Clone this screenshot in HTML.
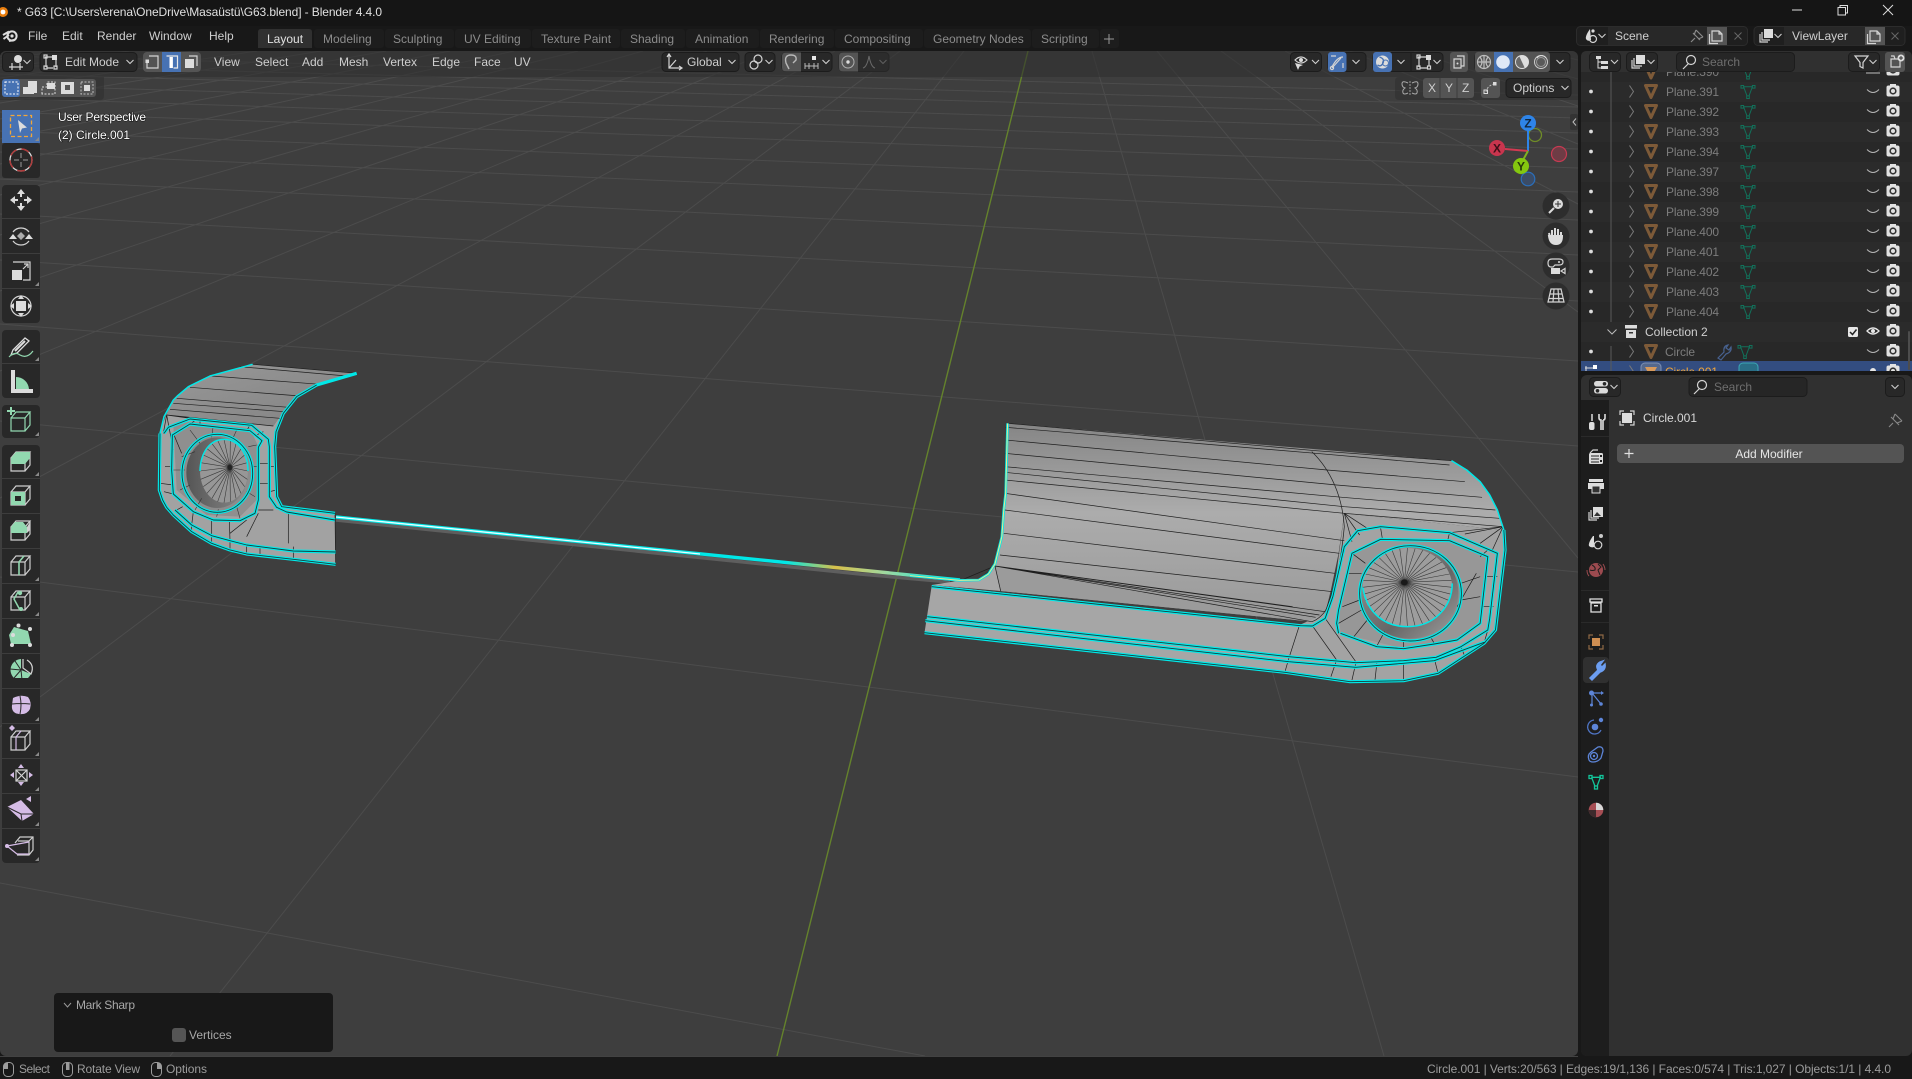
<!DOCTYPE html>
<html lang="en"><head><meta charset="utf-8"><title>G63 - Blender 4.4.0</title>
<style>
html,body{margin:0;padding:0;background:#181818;width:1912px;height:1079px;overflow:hidden}
svg{display:block}
text{font-family:"Liberation Sans",sans-serif;font-size:12px;fill:#cfcfcf}
.m{fill:#cfcfcf}.tab{fill:#8c8c8c}.dim{fill:#7c7c7c;letter-spacing:-.12px}.st{fill:#9c9c9c}
.i{fill:none;stroke:#d4d4d4;stroke-width:1.2}
.f{fill:#dcdcdc;stroke:none}
.btn{fill:#282828;stroke:#1c1c1c}
.on{fill:#545454}.bl{fill:#4772b3}
.g{fill:#92d8b0;stroke:none}.gl{fill:none;stroke:#92d8b0;stroke-width:1.2}
.p{fill:#d5bce6;stroke:none}.pl{fill:none;stroke:#d5bce6;stroke-width:1.2}
.n{vector-effect:non-scaling-stroke}
.dk{fill:none;stroke:#1e1e1e;stroke-width:.7;vector-effect:non-scaling-stroke}
.cy{fill:none;stroke:#00e8e8;stroke-width:1.5;vector-effect:non-scaling-stroke;stroke-linejoin:round}
.cc{fill:none;stroke:#00eaea;stroke-width:3.2;vector-effect:non-scaling-stroke;stroke-linejoin:round}
.cd{fill:none;stroke:#1a3a3a;stroke-width:.9;vector-effect:non-scaling-stroke;stroke-linejoin:round}
</style></head><body>
<svg xmlns="http://www.w3.org/2000/svg" width="1912" height="1079" viewBox="0 0 1912 1079">
<defs>
<clipPath id="vp"><rect x="0" y="51" width="1578" height="1005" rx="6"/></clipPath>
<clipPath id="ol"><rect x="1581" y="72" width="331" height="299"/></clipPath>
<linearGradient id="gt" x1="0" y1="0" x2="0" y2="1"><stop offset="0" stop-color="#858585"/><stop offset=".45" stop-color="#acacac"/><stop offset="1" stop-color="#9a9a9a"/></linearGradient>
<linearGradient id="gl" x1="0" y1="0" x2="1" y2="1"><stop offset="0" stop-color="#989898"/><stop offset="1" stop-color="#828282"/></linearGradient>
<linearGradient id="gw" x1="0" y1="0" x2="1" y2="0"><stop offset="0" stop-color="#555"/><stop offset="1" stop-color="#8a8a8a"/></linearGradient>
<linearGradient id="gw2" x1="0" y1="0" x2="1" y2="1"><stop offset="0" stop-color="#9a9a9a"/><stop offset=".6" stop-color="#666"/><stop offset="1" stop-color="#a0a0a0"/></linearGradient>
<linearGradient id="gs" x1="0" y1="0" x2="1" y2="0"><stop offset="0" stop-color="#00e8e8"/><stop offset=".72" stop-color="#00e8e8"/><stop offset=".8" stop-color="#d8c04a"/><stop offset=".88" stop-color="#9fd8a0"/><stop offset="1" stop-color="#00e8e8"/></linearGradient>
<path id="chev" d="M-3.5 -2 L0 1.5 L3.5 -2" fill="none" stroke="#cfcfcf" stroke-width="1.1"/>
<path id="tri" d="M-5.5 -6 H5.5 L0 6Z" fill="none" stroke="#7d5a38" stroke-width="3" stroke-linejoin="round"/>
<g id="mesh" fill="none" stroke="#12705a" stroke-width="1"><path d="M-4.4 -4.7 H4.4 L1 4.4 M-4.4 -4.7 L-1 4.4"/><rect x="-7" y="-6" width="2.600" height="2.600"/><rect x="4.400" y="-6" width="2.600" height="2.600"/><rect x="-1.300" y="4.400" width="2.600" height="2.600"/></g>
<path id="lash" d="M-6 -2 Q0 4 6 -2" fill="none" stroke="#b5b5b5" stroke-width="1"/>
<g id="cam"><rect x="-6.5" y="-5.5" width="13" height="11" rx="2" fill="#e2e2e2"/><circle r="3.6" fill="#333"/><circle r="2" fill="#e2e2e2"/><rect x="-3" y="-7" width="6" height="2" fill="#e2e2e2"/></g>
<g id="cube" fill="none" stroke="#cfcfcf" stroke-width="1.2"><path d="M-10 -3 H4 V10 H-10Z M-10 -3 L-5 -9 H9 L4 -3 M9 -9 V4 L4 10"/></g>
<path id="corner" d="M0 0 L-4 0 L0 -4Z" fill="#8a8a8a"/>
<g id="dot"><circle r="1.9" fill="#dcdcdc"/></g>
<path id="dbl" vector-effect="non-scaling-stroke" d="M650 70 L530 105 470 140 430 190 408 245 404 290 410 440 425 470 585 490 M72 250 L85 232 150 207 335 226 385 268 388 290 388 440 410 472 440 486 585 510 M97 255 L150 222 330 242 366 272 355 292 355 450 345 490 300 512 220 510 160 485 100 432 95 360Z M105 480 L155 525 215 557 270 572 320 585 460 603 587 606 M100 495 L155 545 215 580 270 600 320 612 460 628 587 643 M60 250 L58 420 68 450 80 472 100 495"/>
<path id="dbr" vector-effect="non-scaling-stroke" d="M57 530 L1020 647 1052 648 1085 625 1105 560 1135 410 1170 362 1230 350 1410 368 1535 430 1515 625 1510 660 1440 710 1375 742 1290 752 1165 758 990 740 45 620 M40 632 L990 755 1165 772 1370 752 1505 695 M1120 670 L1115 640 1120 600 1155 430 1230 388 1410 392 1510 440 1490 640 1430 690 1370 702 1290 716 1220 710 1125 670 M38 668 L980 787 1150 815 1290 812 1380 790 1500 700 1530 660 1555 420 1552 360"/>
</defs>

<!-- chrome -->
<rect width="1912" height="1079" fill="#181818"/>
<rect width="1912" height="26" fill="#151515"/>

<!-- viewport -->
<g clip-path="url(#vp)">
<rect x="0" y="51" width="1578" height="1005" fill="#3e3e3e"/>
<path fill="none" stroke="#4c4c4c" stroke-width="1" d="M64 51L0 59M129 51L0 68M193 51L0 78M257 51L0 89M321 51L0 103M386 51L0 119M450 51L0 139M514 51L0 164M578 51L0 195M643 51L0 235M707 51L0 291M771 51L0 371M835 51L0 498M900 51L0 727M964 51L170 1056M1092 51L1384 1056M1157 51L1578 558M1221 51L1578 312M1285 51L1578 204M1350 51L1578 144M1414 51L1578 106M1478 51L1578 79M1542 51L1578 60
M0 883L925 1056M0 577L1578 777M0 421L1578 572M0 324L1578 446M0 260L1578 361M0 214L1578 301M0 179L1578 255M0 152L1578 220M0 131L1578 192M0 112L1578 168M0 98L1578 149M0 85L1578 133M0 74L1578 118M0 65L1578 107M0 56L1578 95"/>
<path d="M1028 51L777 1056" stroke="#64822c" stroke-width="1.4" fill="none"/>

<!-- thin strip -->
<path d="M336 520 L860 574 L950 582" stroke="#5e5e5e" stroke-width="3.500" fill="none"/>
<path d="M336 517 L860 570 L960 580" stroke="url(#gs)" stroke-width="3.400" fill="none"/>
<path d="M336 517 L700 554" stroke="#eaffff" stroke-width="1.300" fill="none"/>

<!-- left piece -->
<g transform="translate(140 350) scale(.33333)">
<polygon fill="url(#gl)" points="338,43 650,70 530,105 470,140 430,185 400,228 78,195 100,150 145,110 210,78"/>
<polygon fill="#a2a2a2" points="78,195 400,228 430,185 410,240 404,290 410,440 425,470 585,490 587,645 460,628 320,612 270,600 215,580 155,545 100,495 80,472 68,450 58,420 58,250"/>
<polygon fill="#8f8f8f" points="100,225 150,215 330,235 355,290 350,450 300,500 200,495 110,420"/>
<ellipse cx="232" cy="370" rx="108" ry="120" fill="#8c8c8c"/>
<ellipse cx="232" cy="368" rx="93" ry="106" fill="url(#gw)"/>
<ellipse cx="252" cy="363" rx="72" ry="95" fill="#979797"/>
<path class="dk" d="M338 43L650 70M300 50L620 78M215 78L540 103M150 112L480 138M110 145L445 172M100 160L435 185M90 178L420 205M80 195L400 228
M80 195L100 300M80 195L150 205M80 195L70 250M100 250L125 310M150 222L175 205M180 225L180 205M330 225L320 242M350 255L370 245
M60 400L100 405M75 350L95 350M100 432L72 425M128 470L110 480M160 485L155 525M215 510L215 557M268 512L270 572M270 550L320 510M320 560L355 490M400 480L355 480M355 340L388 340M355 400L388 400M405 350L388 350M410 420L388 425
M155 525L155 545M215 557L215 580M270 572L270 600M320 585L320 612M360 590L360 615M460 590L460 628M445 490L445 580M585 490L587 645"/>
<path fill="none" stroke="#3a3a3a" stroke-width=".6" class="n" d="M270 352L324 363M270 352L322 388M270 352L314 410M270 352L303 430M270 352L288 445M270 352L271 455M270 352L252 458M270 352L233 455M270 352L216 445M270 352L201 430M270 352L190 410M270 352L182 388M270 352L180 363M270 352L182 338M270 352L190 315M270 352L201 296M270 352L216 281M270 352L233 271M270 352L252 268M270 352L271 271M270 352L288 281M270 352L303 296M270 352L314 315M270 352L322 338"/>
<path fill="none" stroke="#333" stroke-width=".6" class="n" d="M125 320L165 305M100 360L135 360M120 420L150 405M165 480L185 445M230 500L235 478M300 505L290 470M345 440L320 425M355 350L335 350M350 285L325 290M290 240L280 262M220 225L215 262M150 240L180 280"/>
<circle cx="270" cy="352" r="8" fill="#1c1c1c" opacity=".75"/>
<use href="#dbl" class="cc"/><use href="#dbl" class="cd"/>
<ellipse cx="232" cy="370" rx="106" ry="117" class="cc"/><ellipse cx="232" cy="370" rx="106" ry="117" class="cd"/>
<path class="cy" d="M180 363 C182 300 215 268 252 268 C295 268 324 310 324 363"/>
<path class="cy" d="M338 43L210 78 145 110 112 138 100 150 72 200 60 250M650 70L530 105"/>
</g>

<!-- right piece -->
<g transform="translate(910 410) scale(.38265 .33333)">
<polygon fill="url(#gt)" points="255,40 1415,152 1455,180 1490,215 1515,255 1535,300 1552,360 1135,310 1130,350 1120,430 1100,540 1085,610 1050,635 237,543 222,468 240,380 250,250"/>
<polygon fill="#9b9b9b" points="222,468 1085,600 1050,635 237,543"/>
<polygon fill="#a6a6a6" points="57,525 1020,645 1000,740 980,785 38,668"/>
<polygon fill="#a3a3a3" points="1135,310 1552,360 1558,420 1530,660 1500,700 1380,790 1290,812 1150,815 980,785 1018,645 1085,610 1110,530"/>
<polygon fill="#979797" points="1155,430 1230,388 1410,392 1510,440 1490,640 1430,690 1290,716 1125,670 1120,600"/>
<polygon fill="#a8a8a8" points="130,512 180,510 222,468 237,543 57,525"/>
<ellipse cx="1308" cy="550" rx="136" ry="145" fill="#8d8d8d"/>
<ellipse cx="1305" cy="548" rx="128" ry="138" fill="url(#gw2)"/>
<ellipse cx="1300" cy="532" rx="117" ry="118" fill="#9d9d9d"/>
<path class="dk" d="M255 40L1060 122 1415 152M250 52L1060 130 1410 165M250 90L1090 180 1450 215M248 130L1115 225 1495 262M248 170L1130 262 1530 300M248 187L1135 290 1540 325M248 210L1135 310 1550 350M248 250L1135 392M248 300L1122 430M245 370L1110 490M235 435L1105 545M222 468L1085 605M222 468L1070 615M222 468L1060 622M222 468L1050 635M222 468L1000 590M222 468L237 543M222 468L135 510M180 510L222 468
M1050 125C1100 180 1130 260 1135 350C1125 470 1110 530 1090 590C1085 610 1065 630 1050 635
M1135 310L1195 355M1135 310L1175 375M1135 310L1155 395M1550 350L1410 368M1550 350L1450 372M1550 350L1490 400M1550 350L1520 425M1018 645L990 745L980 785M1052 648L1115 750M1085 625L1165 755M1115 750L1100 800M1165 760L1155 810M1220 760L1215 812M1290 752L1290 812M1370 745L1380 790M1440 710L1450 740M1510 660L1500 700
M1155 430L1190 460M1230 355L1235 390M1410 368L1405 392M1510 420L1490 440M1535 500L1505 500M1525 590L1495 590M1490 500L1440 520M1490 560L1440 570M1480 490L1430 590M1120 640L1180 600M1130 590L1175 570M1145 490L1180 490M1160 680L1195 630M1220 708L1240 665M1290 716L1290 695M1370 700L1360 680"/>
<path fill="none" stroke="#3a3a3a" stroke-width=".6" class="n" d="M1292 517L1417 532M1292 517L1415 553M1292 517L1410 572M1292 517L1401 591M1292 517L1390 608M1292 517L1375 622M1292 517L1358 634M1292 517L1340 643M1292 517L1320 648M1292 517L1300 650M1292 517L1280 648M1292 517L1260 643M1292 517L1242 634M1292 517L1225 622M1292 517L1210 608M1292 517L1199 591M1292 517L1190 572M1292 517L1185 553M1292 517L1183 532M1292 517L1185 511M1292 517L1190 492M1292 517L1199 473M1292 517L1210 456M1292 517L1225 442M1292 517L1242 430M1292 517L1260 421M1292 517L1280 416M1292 517L1300 414M1292 517L1320 416M1292 517L1340 421M1292 517L1358 430M1292 517L1375 442M1292 517L1390 456M1292 517L1401 473M1292 517L1410 492M1292 517L1415 511"/>
<circle cx="1292" cy="517" r="9" fill="#111" opacity=".8"/>
<use href="#dbr" class="cc"/><use href="#dbr" class="cd"/>
<ellipse cx="1308" cy="550" rx="133" ry="143" class="cc"/><ellipse cx="1308" cy="550" rx="133" ry="143" class="cd"/>
<path class="cy" d="M1183 532 C1195 610 1240 650 1300 650 C1370 650 1417 590 1417 520"/>
<path class="cy" d="M1415 152L1455 180 1490 215 1515 255 1535 300 1552 360"/>
<path d="M255 40L250 250 245 300 240 380 222 462 205 492 180 510 130 511 0 497" fill="none" stroke="#00e8e8" stroke-width="2.6" class="n"/>
<path d="M255 40L250 250 245 300 240 380 222 462 205 492 180 510 130 511 0 497" fill="none" stroke="#e8e890" stroke-width="1" class="n"/>
</g>

<!-- translucent regions -->
<rect x="0" y="51" width="1578" height="26" fill="#303030" opacity=".6"/>
<path d="M0 77H104V96Q104 100 100 100H0Z" fill="#303030" opacity=".6"/>
<path d="M1578 77H1399Q1395 77 1395 81V96Q1395 100 1399 100H1578Z" fill="#303030" opacity=".6"/>
</g>

<!-- title bar -->
<circle cx="3" cy="12" r="5" fill="#e87d0d"/><circle cx="3" cy="12" r="2.4" fill="#fff"/>
<text x="17" y="16" textLength="365" lengthAdjust="spacing" style="fill:#e0e0e0">* G63 [C:\Users\erena\OneDrive\Masaüstü\G63.blend] - Blender 4.4.0</text>
<path d="M1792 10H1802" stroke="#ddd" fill="none"/>
<path d="M1838 7.5H1845.5V15H1838Z M1840 7.5V5.5H1847.5V13H1845.5" stroke="#ddd" fill="none"/>
<path d="M1883 5L1893 15M1893 5L1883 15" stroke="#ddd" fill="none"/>

<!-- top bar -->
<g transform="translate(11 36)"><circle cx="1" cy="0" r="4.6" fill="none" stroke="#ddd" stroke-width="2"/><path d="M-8 -1L-2 -4.5 M-7.5 3 L-2 -1 M-2 5L3 4" stroke="#ddd" stroke-width="2" fill="none"/><circle cx="1" cy="0" r="1.6" fill="#ddd"/></g>
<text x="28" y="40" class="m">File</text><text x="62" y="40" class="m">Edit</text><text x="97" y="40" class="m">Render</text><text x="149" y="40" class="m">Window</text><text x="209" y="40" class="m">Help</text>
<g fill="#1d1d1d"><path d="M258 48V32Q258 29 261 29H309Q312 29 312 32V48Z" fill="#303030"/><rect x="314" y="29" width="70" height="19" rx="3"/><rect x="385" y="29" width="69" height="19" rx="3"/><rect x="455" y="29" width="76" height="19" rx="3"/><rect x="532" y="29" width="88" height="19" rx="3"/><rect x="621" y="29" width="64" height="19" rx="3"/><rect x="686" y="29" width="73" height="19" rx="3"/><rect x="760" y="29" width="74" height="19" rx="3"/><rect x="835" y="29" width="88" height="19" rx="3"/><rect x="924" y="29" width="107" height="19" rx="3"/><rect x="1032" y="29" width="67" height="19" rx="3"/><rect x="1100" y="29" width="19" height="19" rx="3"/></g>
<text x="267" y="43" style="fill:#e0e0e0">Layout</text><text x="323" y="43" class="tab">Modeling</text><text x="393" y="43" class="tab">Sculpting</text><text x="464" y="43" class="tab">UV Editing</text><text x="541" y="43" class="tab">Texture Paint</text><text x="630" y="43" class="tab">Shading</text><text x="695" y="43" class="tab">Animation</text><text x="769" y="43" class="tab">Rendering</text><text x="844" y="43" class="tab">Compositing</text><text x="933" y="43" class="tab">Geometry Nodes</text><text x="1041" y="43" class="tab">Scripting</text>
<path d="M1109 34V44M1104 39H1114" stroke="#999" fill="none"/>

<!-- scene selectors -->
<rect x="1576.5" y="26.5" width="171" height="19" rx="4" fill="#1f1f1f" stroke="#2c2c2c"/>
<rect x="1608" y="27" width="99" height="18" fill="#282828"/>
<rect x="1707" y="27" width="20" height="18" class="on"/>
<g transform="translate(1591 36)"><path d="M-1 -7Q-6 0 -5 3Q-3 6 0 4Z" class="f"/><circle cx="2" cy="3" r="3.5" class="i"/><circle cx="2" cy="-5" r="1.6" class="f"/></g><use href="#chev" x="1602" y="36"/>
<text x="1615" y="40">Scene</text>
<g class="i" style="stroke:#8a8a8a"><path d="M1691 42L1695 38M1693 33L1700 40M1696 30L1703 37M1696 30L1694 35M1703 37L1698 39"/></g>
<path d="M1712 31H1719L1722 34V41H1712Z M1719 31V34H1722 M1709.5 34V43.5H1718" class="i"/>
<path d="M1734.5 32.5L1741.5 39.5M1741.5 32.5L1734.5 39.5" stroke="#666" fill="none"/>
<rect x="1754" y="26.5" width="151" height="19" rx="4" fill="#1f1f1f" stroke="#2c2c2c"/>
<rect x="1784" y="27" width="81" height="18" fill="#282828"/><rect x="1865" y="27" width="20" height="18" class="on"/>
<g transform="translate(1767 36)"><rect x="-3" y="-7" width="9" height="9" class="f"/><path d="M-5 -4V4H3M-7 -2V6H1" class="i"/></g><use href="#chev" x="1778" y="36"/>
<text x="1792" y="40">ViewLayer</text>
<path d="M1870 31H1877L1880 34V41H1870Z M1877 31V34H1880 M1867.5 34V43.5H1876" class="i"/>
<path d="M1891.5 32.5L1898.5 39.5M1898.5 32.5L1891.5 39.5" stroke="#666" fill="none"/>

<!-- viewport header -->
<rect x="2.5" y="52.5" width="31" height="19" rx="4" class="btn"/>
<g transform="translate(17 62)"><path d="M-8 5H6M-5 1V8M3 1V8" class="i"/><circle cx="1" cy="-3" r="4" class="f"/></g><use href="#chev" x="27" y="62"/>
<rect x="40" y="52.5" width="97" height="19" rx="4" class="btn"/>
<g transform="translate(51 62)"><rect x="1" y="-7" width="5" height="5" class="f"/><path d="M-6 -5H1M-5 -4V5M-4 6H2M5 -2V5" class="i"/><rect x="-7" y="-7" width="3" height="3" class="i"/><rect x="-7" y="4" width="3" height="3" class="i"/><rect x="3" y="4" width="3" height="3" class="i"/></g>
<text x="65" y="66">Edit Mode</text><use href="#chev" x="130" y="62"/>
<rect x="143" y="52" width="58" height="20" rx="4" class="on"/><rect x="162" y="52" width="19" height="20" class="bl"/>
<g transform="translate(152 62)"><path d="M-3 -6H6V6H-5V0" class="i"/><rect x="-6.5" y="-2.5" width="3.5" height="3.5" class="f"/></g>
<g transform="translate(171.500 62)"><path d="M-5 -6H6V6H2" fill="none" stroke="#e8e8e8" stroke-width="1.2"/><rect x="-2" y="-5" width="3.4" height="11" fill="#fff"/></g>
<g transform="translate(191 62)"><path d="M-2 -6H6V4" class="i"/><rect x="-6" y="-3" width="9" height="9" class="f"/></g>
<text x="214" y="66">View</text><text x="255" y="66">Select</text><text x="302" y="66">Add</text><text x="339" y="66">Mesh</text><text x="383" y="66">Vertex</text><text x="432" y="66">Edge</text><text x="474" y="66">Face</text><text x="514" y="66">UV</text>

<rect x="662" y="52.5" width="77" height="19" rx="4" class="btn"/>
<g transform="translate(673 62)"><path d="M-4 -7V6H8M-4 6L3 -2M-6 -5L-4 -8L-2 -5M6 4L9 6L6 8" class="i"/></g><text x="687" y="66">Global</text><use href="#chev" x="732" y="62"/>
<rect x="745" y="52.5" width="30" height="19" rx="4" class="btn"/>
<g transform="translate(756 62)"><circle cx="-2" cy="3" r="4" class="i"/><circle cx="2" cy="-3" r="4" class="i"/></g><use href="#chev" x="769" y="62"/>
<rect x="782" y="52.5" width="50" height="19" rx="4" class="btn"/><path d="M786 52.500H801V71.500H786Q782 71.500 782 67.500V56.500Q782 52.500 786 52.500Z" class="on"/>
<g transform="translate(791 62)"><path d="M-2 7 L-5 1 Q-7 -7 0 -7 Q6 -7 5 -2 L2 1" fill="none" stroke="#b8b8b8" stroke-width="1.4"/></g>
<g transform="translate(811 62)"><path d="M-6 4H7M-6 1V7M-2 1V7M3 1V7M7 1V7" stroke="#b8b8b8" fill="none"/><rect x="1" y="-6" width="4" height="4" fill="#e8e8e8"/></g><use href="#chev" x="826" y="62"/>
<rect x="839" y="52.5" width="50" height="19" rx="4" fill="#2c2c2c" stroke="#262626"/><path d="M843 52.500H858V71.500H843Q839 71.500 839 67.500V56.500Q839 52.500 843 52.500Z" class="on"/>
<circle cx="848" cy="62" r="6" fill="none" stroke="#b0b0b0"/><circle cx="848" cy="62" r="1.7" fill="#ddd"/>
<path d="M863 68 Q867 67 869 56 Q871 67 875 68" fill="none" stroke="#6a6a6a"/><use href="#chev" x="883" y="62" opacity=".3"/>

<rect x="1290.5" y="52.5" width="31" height="19" rx="4" class="btn"/>
<g transform="translate(1301 62)"><path d="M-6 -2Q0 -8 6 -2Q0 4 -6 -2Z" class="i"/><circle cy="-2" r="2" class="f"/><path d="M-6 1L-3 8L-1.500 4.500L2 3Z" class="f"/></g><use href="#chev" x="1315.500" y="62"/>
<rect x="1328" y="52.5" width="38" height="19" rx="4" class="btn"/><rect x="1328" y="52" width="18.500" height="20" rx="3" class="bl"/>
<g transform="translate(1337 62)"><path d="M-5 5Q0 -5 6 -5" class="i"/><circle cx="-5" cy="6" r="1.6" class="i"/><path d="M-6 -6H-1M6 6V1M-5 6 L4 -4" class="i"/></g><use href="#chev" x="1356" y="62"/>
<rect x="1373" y="52.5" width="70" height="19" rx="4" class="btn"/><rect x="1373" y="52" width="19" height="20" rx="3" class="bl"/>
<g transform="translate(1382.500 62)"><circle r="6.500" class="f"/><path d="M-3 -5Q3 -3 0 2Q-2 5 -5 3" stroke="#4772b3" fill="none" stroke-width="1.4"/><circle cx="3" cy="1" r="3" fill="none" stroke="#4772b3"/></g><use href="#chev" x="1401" y="62"/>
<path d="M1411 53V71" stroke="#1d1d1d"/>
<g transform="translate(1424 62)"><rect x="2" y="-7" width="5" height="5" class="f"/><path d="M-6 -5H2M-5 -4V5M-4 6H3M5 -2V4" class="i"/><rect x="-7" y="-7" width="3" height="3" class="i"/><rect x="-7" y="4" width="3" height="3" class="i"/><rect x="3.500" y="4" width="3" height="3" class="i"/></g><use href="#chev" x="1437" y="62"/>
<rect x="1450" y="52" width="18" height="20" rx="3" class="on"/>
<path d="M1457 56H1464V66H1461M1454 59H1461V68H1454Z" class="i"/><circle cx="1457.500" cy="63.500" r="1" class="f"/>
<rect x="1475" y="52.5" width="95" height="19" rx="4" class="btn"/><rect x="1475" y="52" width="75" height="20" rx="3" class="on"/><rect x="1494" y="52" width="19" height="20" class="bl"/>
<g class="i" style="stroke:#bdbdbd"><circle cx="1484" cy="62" r="6.500"/><path d="M1477.500 62H1490.500M1484 55.500V68.500M1480 57Q1484 62 1480 67M1488 57Q1484 62 1488 67"/></g>
<circle cx="1503" cy="62" r="6.800" fill="#e0e8f6"/>
<circle cx="1522" cy="62" r="6.500" fill="#6a6a6a" stroke="#ddd"/><path d="M1522 55.500A6.500 6.500 0 0 1 1522 68.500Z" fill="#ddd" transform="rotate(-25 1522 62)"/>
<circle cx="1541" cy="62" r="6.500" fill="#5a5a5a" stroke="#ccc"/><path d="M1537 58A5.500 5.500 0 0 1 1546 58" stroke="#ddd" fill="none"/><circle cx="1541" cy="62" r="4.500" fill="none" stroke="#9a9a9a"/>
<use href="#chev" x="1560" y="62"/>

<!-- tool settings row -->
<rect x="2" y="79" width="94" height="18" rx="3" class="on"/><rect x="2" y="79" width="18" height="18" rx="3" class="bl"/>
<rect x="5" y="82" width="13" height="12" fill="none" stroke="#fff" stroke-dasharray="2 1.5"/>
<rect x="23" y="87" width="11" height="7" class="f"/><rect x="28" y="81" width="9" height="12" fill="#dcdcdc"/>
<path d="M42 94V87H47V82H55V94Z M47 87H51V90" fill="none" stroke="#dcdcdc" stroke-dasharray="2 1.5"/><rect x="47" y="83" width="8" height="6" class="f"/>
<rect x="61" y="82" width="13" height="12" class="f"/><rect x="65" y="85" width="5" height="5" fill="#545454"/>
<rect x="81" y="82" width="12" height="12" fill="none" stroke="#bbb" stroke-dasharray="2 1.5"/><rect x="84" y="85" width="6" height="6" class="f"/>

<g transform="translate(1411 88)"><path d="M-1 -7V7" stroke="#999" stroke-dasharray="2 1" fill="none"/><path d="M-3 -5Q-9 -8 -9 -4Q-9 -1 -6 0Q-9 2 -8 5Q-7 7 -3 5M1 -5Q7 -8 7 -4Q7 -1 4 0Q7 2 6 5Q5 7 1 5" fill="none" stroke="#aaa"/></g>
<rect x="1423" y="78" width="51" height="20" rx="3" class="on"/><path d="M1440 78V98M1457 78V98" stroke="#3d3d3d"/>
<text x="1428" y="92">X</text><text x="1445" y="92">Y</text><text x="1462" y="92">Z</text>
<rect x="1481" y="78" width="19" height="20" rx="3" class="on"/><path d="M1486 92Q1487 86 1494 84" fill="none" stroke="#bbb" stroke-dasharray="2 1.500"/><rect x="1484" y="90" width="3.500" height="3.500" fill="none" stroke="#ddd"/><rect x="1493" y="82" width="3.500" height="3.500" class="f"/>
<rect x="1506" y="78.5" width="65" height="19" rx="4" class="btn"/><text x="1513" y="92">Options</text><use href="#chev" x="1565" y="88"/>

<!-- viewport text -->
<text x="58" y="121" textLength="88" lengthAdjust="spacing" style="fill:#fff;paint-order:stroke;stroke:#000;stroke-width:1.2px;stroke-opacity:.55">User Perspective</text>
<text x="58" y="139" style="fill:#fff;paint-order:stroke;stroke:#000;stroke-width:1.2px;stroke-opacity:.55">(2) Circle.001</text>

<!-- collapse tab -->
<rect x="1570" y="114" width="8" height="16" rx="2" fill="#333"/><path d="M1576 118.500L1573 122L1576 125.500" fill="none" stroke="#bbb"/>

<!-- toolbar -->
<g fill="#282828"><rect x="2" y="143" width="38" height="35" rx="3"/><rect x="2" y="185" width="38" height="138" rx="4"/><rect x="2" y="330" width="38" height="68" rx="4"/><rect x="2" y="405" width="38" height="33" rx="4"/><rect x="2" y="445" width="38" height="418" rx="4"/></g>
<path d="M2 110H40V143H2Z" class="bl"/>
<path d="M2 218.500H40M2 253.500H40M2 288.500H40M2 363.500H40M2 478.500H40M2 513.500H40M2 548.500H40M2 583.500H40M2 618.500H40M2 653.500H40M2 688.500H40M2 723.500H40M2 758.500H40M2 793.500H40M2 828.500H40" stroke="#3d3d3d"/>
<g fill="#9a9a9a"><use href="#corner" x="39" y="141"/><use href="#corner" x="39" y="286"/><use href="#corner" x="39" y="361"/><use href="#corner" x="39" y="436"/><use href="#corner" x="39" y="476"/><use href="#corner" x="39" y="581"/><use href="#corner" x="39" y="616"/><use href="#corner" x="39" y="721"/><use href="#corner" x="39" y="756"/><use href="#corner" x="39" y="791"/><use href="#corner" x="39" y="826"/><use href="#corner" x="39" y="861"/></g>

<rect x="10.500" y="115.500" width="21" height="21" fill="none" stroke="#f0a63a" stroke-width="1.3" stroke-dasharray="4 2.500"/>
<path d="M18 120L27 127.500L22 128.500L20 133Z" class="f"/>
<g transform="translate(21 160)"><circle r="11" fill="none" stroke="#ddd" stroke-width="1.3"/><circle r="11" fill="none" stroke="#b03a3a" stroke-width="1.4" stroke-dasharray="8 5"/><path d="M-7 0H-2M2 0H7M0 -7V-2M0 2V7" stroke="#9a9a9a" fill="none"/></g>
<g transform="translate(21 200)" class="f"><path d="M0 -11L-4 -6H4Z M0 11L-4 6H4Z M-11 0L-6 -4V4Z M11 0L6 -4V4Z"/><path d="M-1 -7H1V-3H-1Z M-1 3H1V7H-1Z M-7 -1H-3V1H-7Z M3 -1H7V1H3Z"/></g>
<g transform="translate(21 236)"><path d="M-8 -4A10 10 0 0 1 8 -4M8 5A10 10 0 0 1 -8 5" class="i"/><path d="M-12 1L-4 1L-8 -4Z M12 1L4 1L8 -4Z" class="f" transform="translate(0 2)"/><path d="M0 -4L4 0L0 4L-4 0Z" fill="#aaa"/></g>
<g transform="translate(21 271)"><path d="M-8 -9H9V9H2" class="i"/><rect x="-9" y="-1" width="10" height="10" class="f"/><path d="M2 -2L7 -7M3 -7H7V-3" class="i"/></g>
<g transform="translate(21 306)"><circle r="10" class="i"/><rect x="-5" y="-5" width="10" height="10" class="f"/><path d="M0 -11L-3 -7H3Z M0 11L-3 7H3Z M-11 0L-7 -3V3Z M11 0L7 -3V3Z" class="f"/></g>
<g transform="translate(21 347)"><path d="M-8 3L4 -9L8 -6L-4 6L-10 8Z" fill="#222" stroke="#ddd" stroke-width="1.300"/><path d="M-6 4L4 -6" stroke="#ddd" stroke-width="2"/><path d="M-12 10Q-6 4 -1 8Q6 12 12 4" class="gl" stroke-width="1.500"/></g>
<g transform="translate(21 382)"><path d="M-8 -12V9H12" class="i" stroke-width="1.500"/><path d="M-6 -12V7H12V11H-10V-12Z" class="f"/><path d="M-5 -5A13 13 0 0 1 8 7H-5Z" class="g"/></g>
<g transform="translate(21 421)"><path d="M-10 -3H4V10H-10Z M-10 -3L-5 -9H9L4 -3M9 -9V4L4 10" class="gl"/><path d="M-14 -10H-6M-10 -14V-6" stroke="#92d8b0" stroke-width="2" fill="none"/></g>
<g transform="translate(21 461)"><use href="#cube"/><path d="M-10 -3H4V3H-10Z M-10 -3L-5 -9H9L4 -3Z M4 -3L9 -9V-3L4 3Z" class="g"/></g>
<g transform="translate(21 495)"><use href="#cube"/><path d="M-10 -3H4V10H-10Z" class="g"/><rect x="-6" y="1" width="6" height="5" fill="#282828"/></g>
<g transform="translate(21 530)"><use href="#cube"/><path d="M-10 -3L-6 -8 H2 L6 -3 V3H-10Z" class="g"/><path d="M6 -3L9 -8V0L6 3Z" fill="#cfcfcf"/></g>
<g transform="translate(21 565)"><use href="#cube"/><path d="M-2 -3V10M-2 -3L3 -9" stroke="#92d8b0" stroke-width="1.600" fill="none"/></g>
<g transform="translate(21 600)"><use href="#cube"/><path d="M-3 -8L-7 -1L-1 10" stroke="#92d8b0" stroke-width="1.500" fill="none"/><circle cx="-1" cy="-7" r="2.200" class="g"/><circle cx="0" cy="9" r="2" class="g"/></g>
<path d="M14 627L28 631L31 644H11L9 635Z" class="g"/><g class="f"><circle cx="18.500" cy="625.500" r="2"/><circle cx="30" cy="629" r="2"/><circle cx="13" cy="635" r="2"/><circle cx="12" cy="645" r="2"/><circle cx="30" cy="645" r="2"/></g>
<g transform="translate(21 670)"><path d="M0 0L0 -11A11 11 0 0 0 -7 8L7 8Z M0 0L7 8Q9 6 10 4Z" class="g"/><path d="M2 -11L2 -2L10 4Q14 -5 6 -10" class="i"/><path d="M0 0L-11 -1M0 0L-7 8M0 0L1 10M0 0L-6 -9" stroke="#282828" fill="none"/></g>
<g transform="translate(21 705)"><path d="M-8 -7Q0 -11 7 -8Q11 -3 9 4Q6 10 -2 9Q-10 8 -9 0Z" class="p"/><path d="M-9 -1Q0 -2 9 -1M-1 -9Q1 0 -1 9" stroke="#282828" fill="none"/></g>
<g transform="translate(21 740)"><use href="#cube"/><path d="M-5 -3V10M-5 -3L0 -9" class="pl"/><path d="M-11 -11H-5L-8 -14Z M-11 -11H-5L-8 -8Z" class="p" transform="translate(-1 -1)"/></g>
<g transform="translate(21 775)"><rect x="-5" y="-5" width="11" height="11" class="i"/><path d="M-5 -5L6 6M6 -5L-5 6" class="i"/><path d="M0 -11L-3 -7H3Z M0 11L-3 7H3Z M-11 0L-7 -3V3Z M12 0L8 -3V3Z" class="p"/></g>
<g transform="translate(21 810)"><path d="M-14 -3L0 -10L13 4L1 11Z" class="p"/><path d="M-14 -3L0 4L13 4M0 4L1 11" stroke="#282828" fill="none"/><path d="M7 -11H12M10 -14L5 -11L10 -8Z" class="p"/></g>
<g transform="translate(21 845)"><path d="M-6 -2L-1 -8H12V5L8 10H-4" stroke="#cfcfcf" fill="none" stroke-width="1.200"/><path d="M-3 -4H8V10M8 -4L12 -8" stroke="#cfcfcf" fill="none" stroke-width="1.200"/><path d="M-14 1L8 -3M-14 1L-4 9H8" class="pl"/><circle cx="-14" cy="1" r="2" class="p"/></g>

<!-- gizmo -->
<circle cx="1535" cy="135" r="6.500" fill="none" stroke="#6f8c27" stroke-width="1.300"/>
<circle cx="1559" cy="154" r="7.500" fill="#6e3c45" stroke="#c73a52" stroke-width="1.200"/>
<circle cx="1528" cy="179" r="6.800" fill="#3b4c66" stroke="#2a6fbb" stroke-width="1.200"/>
<path d="M1528 129V151" stroke="#2e84e8" stroke-width="2"/>
<path d="M1505 149L1528 151" stroke="#d23a52" stroke-width="2"/>
<path d="M1528 151L1523 160" stroke="#7fb020" stroke-width="2"/>
<circle cx="1528" cy="123" r="8" fill="#2e84e8"/><text x="1528" y="127.500" text-anchor="middle" style="font-weight:bold;fill:#12283f">Z</text>
<circle cx="1497" cy="148" r="8" fill="#c9354e"/><text x="1497" y="152.500" text-anchor="middle" style="font-weight:bold;fill:#3d0f18">X</text>
<circle cx="1521" cy="166" r="8" fill="#84c70f"/><text x="1521" y="170.500" text-anchor="middle" style="font-weight:bold;fill:#26390a">Y</text>
<g fill="#2d2d2d"><circle cx="1556" cy="206" r="13.500"/><circle cx="1556" cy="236" r="13.500"/><circle cx="1556" cy="266" r="13.500"/><circle cx="1556" cy="296" r="13.500"/></g>
<g transform="translate(1556 206)"><circle cx="2" cy="-2" r="5" fill="#dcdcdc"/><path d="M-2 2L-7 7" stroke="#dcdcdc" stroke-width="2"/><path d="M-1 -2H5M2 -5V1" stroke="#333"/></g>
<g transform="translate(1556 236)"><path d="M-6 1L-7 -3M-4 0V-6M-1 0V-8M2 0V-7M5 1V-4M-7 0Q-6 8 0 8Q6 8 6 0Z" stroke="#dcdcdc" stroke-width="2" fill="#dcdcdc"/></g>
<g transform="translate(1556 266)"><path d="M-8 -3Q-8 -7 -4 -7H3Q7 -7 7 -4Q7 -1 3 -1H-1L-3 1H-5Q-8 1 -8 -3Z" class="i"/><rect x="-5" y="2" width="9" height="6" class="f"/><path d="M5 5L9 2.500V7.500Z" class="i"/><circle cx="3" cy="-4" r="1" class="f"/></g>
<g transform="translate(1556 296)"><path d="M-5 -7H5L8 6H-8ZM-2 -7L-3 6M2 -7L3 6M-6.500 -2H6.500M-7.500 2.500H7.500" class="i"/></g>

<!-- redo panel -->
<rect x="54" y="993" width="279" height="59" rx="4" fill="#181818"/>
<path d="M64 1003L67.500 1007L71 1003" fill="none" stroke="#999"/>
<text x="76" y="1009" textLength="59" lengthAdjust="spacing" style="fill:#a8a8a8">Mark Sharp</text>
<rect x="172" y="1028" width="14" height="14" rx="3" fill="#555"/>
<text x="189" y="1039" style="fill:#a8a8a8">Vertices</text>

<!-- outliner -->
<rect x="1581" y="51" width="331" height="320" rx="6" fill="#282828"/>
<g fill="#2b2b2b"><rect x="1581" y="82" width="331" height="20"/><rect x="1581" y="122" width="331" height="20"/><rect x="1581" y="162" width="331" height="20"/><rect x="1581" y="202" width="331" height="20"/><rect x="1581" y="242" width="331" height="20"/><rect x="1581" y="282" width="331" height="20"/><rect x="1581" y="322" width="331" height="20"/></g>
<g clip-path="url(#ol)">
<rect x="1581" y="361" width="331" height="20" fill="#334d80"/>
<path d="M1611 72V322M1611 346V371" stroke="#5a5a5a"/>
<text x="1666" y="76" class="dim">Plane.390</text><use href="#tri" x="1651" y="72"/><use href="#mesh" x="1748" y="72"/><path d="M1866 73H1880" stroke="#bbb"/><use href="#cam" x="1893" y="70"/>
<use href="#dot" x="1591" y="91.500"/><use href="#tri" x="1651" y="91.500"/><use href="#mesh" x="1748" y="91.500"/><use href="#lash" x="1873" y="91.500"/><use href="#cam" x="1893" y="91"/><text x="1666" y="96" class="dim">Plane.391</text>
<use href="#dot" x="1591" y="111.500"/><use href="#tri" x="1651" y="111.500"/><use href="#mesh" x="1748" y="111.500"/><use href="#lash" x="1873" y="111.500"/><use href="#cam" x="1893" y="111"/><text x="1666" y="116" class="dim">Plane.392</text>
<use href="#dot" x="1591" y="131.500"/><use href="#tri" x="1651" y="131.500"/><use href="#mesh" x="1748" y="131.500"/><use href="#lash" x="1873" y="131.500"/><use href="#cam" x="1893" y="131"/><text x="1666" y="136" class="dim">Plane.393</text>
<use href="#dot" x="1591" y="151.500"/><use href="#tri" x="1651" y="151.500"/><use href="#mesh" x="1748" y="151.500"/><use href="#lash" x="1873" y="151.500"/><use href="#cam" x="1893" y="151"/><text x="1666" y="156" class="dim">Plane.394</text>
<use href="#dot" x="1591" y="171.500"/><use href="#tri" x="1651" y="171.500"/><use href="#mesh" x="1748" y="171.500"/><use href="#lash" x="1873" y="171.500"/><use href="#cam" x="1893" y="171"/><text x="1666" y="176" class="dim">Plane.397</text>
<use href="#dot" x="1591" y="191.500"/><use href="#tri" x="1651" y="191.500"/><use href="#mesh" x="1748" y="191.500"/><use href="#lash" x="1873" y="191.500"/><use href="#cam" x="1893" y="191"/><text x="1666" y="196" class="dim">Plane.398</text>
<use href="#dot" x="1591" y="211.500"/><use href="#tri" x="1651" y="211.500"/><use href="#mesh" x="1748" y="211.500"/><use href="#lash" x="1873" y="211.500"/><use href="#cam" x="1893" y="211"/><text x="1666" y="216" class="dim">Plane.399</text>
<use href="#dot" x="1591" y="231.500"/><use href="#tri" x="1651" y="231.500"/><use href="#mesh" x="1748" y="231.500"/><use href="#lash" x="1873" y="231.500"/><use href="#cam" x="1893" y="231"/><text x="1666" y="236" class="dim">Plane.400</text>
<use href="#dot" x="1591" y="251.500"/><use href="#tri" x="1651" y="251.500"/><use href="#mesh" x="1748" y="251.500"/><use href="#lash" x="1873" y="251.500"/><use href="#cam" x="1893" y="251"/><text x="1666" y="256" class="dim">Plane.401</text>
<use href="#dot" x="1591" y="271.500"/><use href="#tri" x="1651" y="271.500"/><use href="#mesh" x="1748" y="271.500"/><use href="#lash" x="1873" y="271.500"/><use href="#cam" x="1893" y="271"/><text x="1666" y="276" class="dim">Plane.402</text>
<use href="#dot" x="1591" y="291.500"/><use href="#tri" x="1651" y="291.500"/><use href="#mesh" x="1748" y="291.500"/><use href="#lash" x="1873" y="291.500"/><use href="#cam" x="1893" y="291"/><text x="1666" y="296" class="dim">Plane.403</text>
<use href="#dot" x="1591" y="311.500"/><use href="#tri" x="1651" y="311.500"/><use href="#mesh" x="1748" y="311.500"/><use href="#lash" x="1873" y="311.500"/><use href="#cam" x="1893" y="311"/><text x="1666" y="316" class="dim">Plane.404</text>
<path transform="translate(1 0)" fill="none" stroke="#7a7a7a" d="M1628.500 85.500L1632.500 91.500L1628.500 97.500M1628.500 105.500L1632.500 111.500L1628.500 117.500M1628.500 125.500L1632.500 131.500L1628.500 137.500M1628.500 145.500L1632.500 151.500L1628.500 157.500M1628.500 165.500L1632.500 171.500L1628.500 177.500M1628.500 185.500L1632.500 191.500L1628.500 197.500M1628.500 205.500L1632.500 211.500L1628.500 217.500M1628.500 225.500L1632.500 231.500L1628.500 237.500M1628.500 245.500L1632.500 251.500L1628.500 257.500M1628.500 265.500L1632.500 271.500L1628.500 277.500M1628.500 285.500L1632.500 291.500L1628.500 297.500M1628.500 305.500L1632.500 311.500L1628.500 317.500M1628.500 345.500L1632.500 351.500L1628.500 357.500M1628.500 365.500L1632.500 371.500L1628.500 377.500"/>
<!-- Collection 2 -->
<path d="M1607.500 329.500L1612 334L1616.500 329.500" fill="none" stroke="#bbb"/>
<path d="M1625 325H1637V328.500H1625Z M1626 330H1636V338H1626Z" class="f"/><rect x="1629" y="332" width="4" height="1.500" fill="#333"/>
<text x="1645" y="336">Collection 2</text>
<rect x="1848" y="327" width="10" height="10" rx="1.500" fill="#e6e6e6"/><path d="M1850 332L1852.500 334.500L1856.500 329.500" fill="none" stroke="#222" stroke-width="1.500"/>
<path d="M1867 331Q1873 325 1879 331Q1873 337 1867 331Z" fill="none" stroke="#e6e6e6" stroke-width="1.300"/><circle cx="1873" cy="331" r="2" fill="#e6e6e6"/>
<use href="#cam" x="1893" y="331"/>
<!-- Circle -->
<use href="#dot" x="1591" y="351.500"/><use href="#tri" x="1651" y="351.500"/><text x="1665" y="356" class="dim">Circle</text>
<path d="M1718 358L1724 352Q1723 346 1728 345L1726 348L1729 350L1731 347Q1732 352 1726 354L1721 360Z" fill="none" stroke="#47618f" stroke-width="1.200"/>
<use href="#mesh" x="1745" y="351.500"/><use href="#lash" x="1873" y="351.500"/><use href="#cam" x="1893" y="351"/>
<!-- Circle.001 -->
<rect x="1641" y="363" width="20" height="20" rx="4" fill="#55688c" stroke="#7c8fb5"/><path d="M1645 367H1657L1651 378Z" fill="#d89a5c"/>
<text x="1665" y="376" style="fill:#f0a53a;letter-spacing:-.12px">Circle.001</text>
<rect x="1739" y="363" width="19" height="20" rx="4" fill="#2a6e86" stroke="#3ba7b5"/>
<path d="M1585 368H1593M1586 366V373" stroke="#ddd" fill="none"/><rect x="1593" y="365" width="4" height="4" fill="#fff"/>
<circle cx="1873" cy="371" r="3" fill="#e6e6e6"/><use href="#cam" x="1893" y="371"/>
</g>
<rect x="1908" y="331" width="2" height="39" rx="1" fill="#4d4d4d"/>
<path d="M1581 72V57Q1581 51 1587 51H1906Q1912 51 1912 57V72Z" fill="#303030"/>
<rect x="1589.500" y="52.500" width="31" height="19" rx="4" class="btn"/>
<g transform="translate(1602 62)" fill="#dcdcdc"><rect x="-6" y="-6" width="5" height="3"/><rect x="-1" y="-1" width="7" height="3"/><rect x="-1" y="4" width="7" height="3"/><path d="M-4 -3V6H-1M-4 0H-1" fill="none" stroke="#dcdcdc"/></g><use href="#chev" x="1614.500" y="62"/>
<rect x="1626.500" y="52.500" width="31" height="19" rx="4" class="btn"/>
<g transform="translate(1639 62)"><rect x="-3" y="-7" width="9" height="9" class="f"/><path d="M-5 -4V4H3M-7 -2V6H1" class="i"/></g><use href="#chev" x="1651" y="62"/>
<rect x="1676.500" y="52.500" width="118" height="19" rx="4" fill="#262626" stroke="#1c1c1c"/>
<circle cx="1691" cy="60" r="4.500" class="i"/><path d="M1688 64L1683 69" class="i"/>
<text x="1702" y="66" style="fill:#6e6e6e">Search</text>
<rect x="1848.500" y="52.500" width="31" height="19" rx="4" class="btn"/>
<path d="M1855 56H1868L1863 62.500V68L1860 66.500V62.500Z" class="i"/><use href="#chev" x="1873" y="62"/>
<rect x="1885" y="52" width="20" height="20" rx="3" class="on"/>
<path d="M1891 59H1900V67H1891Z M1891 56H1894L1895 59" class="i"/><circle cx="1901" cy="58" r="3.500" fill="#ddd"/><path d="M1899 58H1903M1901 56V60" stroke="#333"/>

<!-- properties -->
<rect x="1581" y="375" width="331" height="681" rx="6" fill="#303030"/>
<path d="M1581 400H1609V1056H1587Q1581 1056 1581 1050Z" fill="#1d1d1d"/>
<rect x="1589.500" y="377.500" width="31" height="19" rx="4" class="btn"/>
<g transform="translate(1601 387)"><rect x="-7" y="-6" width="14" height="5.500" rx="2.700" class="f"/><rect x="-7" y="1" width="14" height="5.500" rx="2.700" class="f"/><circle cx="3.500" cy="-3.200" r="1.800" fill="#282828"/><circle cx="-3.500" cy="3.800" r="1.800" fill="#282828"/></g><use href="#chev" x="1614" y="387"/>
<rect x="1689" y="377.500" width="118" height="19" rx="4" fill="#262626" stroke="#1c1c1c"/>
<circle cx="1702" cy="385" r="4.500" class="i"/><path d="M1699 389L1694 394" class="i"/>
<text x="1714" y="391" style="fill:#6e6e6e">Search</text>
<rect x="1885.500" y="377.500" width="19" height="19" rx="4" class="btn"/><use href="#chev" x="1895" y="387"/>

<g transform="translate(1627 418)"><rect x="-5" y="-5" width="10" height="10" class="f"/><path d="M-7 -3V-7H-3M3 -7H7V-3M7 3V7H3M-3 7H-7V3" class="i"/></g>
<text x="1643" y="422" style="fill:#d8d8d8">Circle.001</text>
<path d="M1889 427L1893 423M1891 417L1899 425M1895 414L1902 421M1895 414L1893 419M1902 421L1897 423" fill="none" stroke="#888" stroke-width="1.100"/>
<rect x="1617" y="444" width="287" height="19" rx="4" class="on"/>
<path d="M1629 449V458M1624.500 453.500H1633.500" stroke="#e0e0e0" fill="none" stroke-width="1.200"/>
<text x="1769" y="458" text-anchor="middle" style="fill:#e6e6e6">Add Modifier</text>

<rect x="1583" y="657" width="26" height="26" rx="4" fill="#303030"/>
<g stroke="#2a2a2a"><path d="M1581 436.500H1609M1581 590.500H1609M1581 622.500H1609"/></g>
<g transform="translate(1596 422)"><path d="M3 -8V-4Q3 -2 5 -2V8M7 -2V8M9 -8V-4Q9 -2 7 -2" stroke="#ddd" stroke-width="1.600" fill="none"/><path d="M-4 -8V-1" stroke="#ddd" stroke-width="1.500"/><rect x="-7" y="0" width="5.500" height="8" rx="2" class="f"/></g>
<g transform="translate(1596 458)"><rect x="-7" y="-5" width="14" height="11" rx="1.500" class="f"/><path d="M-6 -5L-3 -8H2" class="i"/><path d="M-5 -2H3M-5 1H3M-5 4H3" stroke="#222"/><rect x="4" y="-3" width="2" height="2" fill="#222"/><rect x="4" y="2" width="2" height="2" fill="#222"/></g>
<g transform="translate(1596 486)"><rect x="-7" y="-7" width="14" height="3" fill="#ddd"/><rect x="-8" y="-3" width="16" height="6" fill="#ddd"/><rect x="-4" y="0" width="8" height="7" fill="#333" stroke="#ddd"/></g>
<g transform="translate(1596 514)"><rect x="-3" y="-7" width="10" height="10" class="f"/><path d="M-5 -4V4H3M-7 -2V6H1" class="i"/><path d="M-2 2L1 -2L5 2Z" fill="#333"/></g>
<g transform="translate(1596 542)"><path d="M-3 -6Q-8 1 -7 4Q-5 6 -2 5V-6Z" class="f"/><circle cx="2" cy="3" r="3.800" class="i"/><circle cx="5" cy="-6" r="2" fill="#c9c9c9"/></g>
<g transform="translate(1596 570)"><circle r="7" fill="#9c4a4f"/><path d="M-4 -5Q0 -3 -1 0Q-4 1 -6 0M2 -6L5 -3L2 0L4 5" stroke="#1d1d1d" fill="none"/><path d="M-7 6Q-9 4 -9 0M7 -6Q9 -3 9 0" stroke="#9c4a4f" fill="none"/></g>
<g transform="translate(1596 606)"><path d="M-6 -7H6V-4H-6Z" fill="none" stroke="#e2e2e2" stroke-width="1.300"/><path d="M-5 -3H5V6H-5Z" fill="none" stroke="#e2e2e2" stroke-width="1.300"/><rect x="-2" y="-1" width="4" height="1.500" fill="#e2e2e2"/></g>
<g transform="translate(1596 642)"><rect x="-4" y="-4" width="8" height="8" fill="#d08f52"/><path d="M-7 -3V-7H-3M3 -7H7V-3M7 3V7H3M-3 7H-7V3" fill="none" stroke="#8f6a45" stroke-width="1.200"/></g>
<path d="M1590 678L1598 670Q1595 665 1600 662L1603 661L1600 665L1602 667L1605 664Q1606 670 1600 672L1592 680Z" fill="#6c9ef2" stroke="#6c9ef2" stroke-width="1.500"/>
<g transform="translate(1596 698)"><circle cx="-4.500" cy="-5" r="2.500" fill="#5d85d8"/><path d="M-4 -5H6M-4 -5V7M-4 -5L5 6" stroke="#5d85d8" stroke-width="1.200" fill="none"/><circle cx="-4.500" cy="7" r="1.500" fill="#5d85d8"/><circle cx="5" cy="6" r="1.800" fill="#5d85d8"/><path d="M5 -7L8 -5L5 -3Z" fill="#5d85d8"/></g>
<g transform="translate(1596 726)"><path d="M5 4A7 7 0 1 1 -2 -6" fill="none" stroke="#4f74c4" stroke-width="1.300"/><circle cx="-1" cy="1" r="3.300" fill="#5d85d8"/><circle cx="5" cy="-6" r="2.200" fill="#5d85d8"/></g>
<g transform="translate(1596 754)"><path d="M-7 6Q-9 1 -5 -2L2 -7Q7 -8 7 -3L5 4Q2 8 -3 8Q-6 8 -7 6Z" fill="none" stroke="#5d85d8" stroke-width="1.300"/><circle cx="-2" cy="2" r="3.500" fill="none" stroke="#5d85d8" stroke-width="1.300"/><circle cx="-2" cy="2" r="1.200" fill="#5d85d8"/></g>
<g transform="translate(1596 782)" fill="none" stroke="#13c49a" stroke-width="1.300"><path d="M-4.400 -4.700H4.400L1 4.400M-4.400 -4.700L-1 4.400"/><rect x="-7" y="-6.500" width="3" height="3"/><rect x="4" y="-6.500" width="3" height="3"/><rect x="-1.500" y="4" width="3" height="3"/></g>
<g transform="translate(1596 810)"><circle r="7.300" fill="#a64e54"/><path d="M0 -7.300A7.300 7.300 0 0 1 7.300 0H0Z" fill="#d8d8d8"/><path d="M0 0H-7.300A7.300 7.300 0 0 0 0 7.300Z" fill="#3d2a2c"/></g>

<!-- status bar -->
<rect y="1057" width="1912" height="22" fill="#181818"/>
<path d="M0 1056.500H1578" stroke="#555" opacity=".7"/>
<g fill="none" stroke="#9c9c9c"><rect x="3.500" y="1062.500" width="10" height="14" rx="4"/><rect x="62.500" y="1062.500" width="10" height="14" rx="4"/><rect x="151.500" y="1062.500" width="10" height="14" rx="4"/></g>
<path d="M3.500 1069V1066.500Q3.500 1062.500 8 1062.500V1069Z" fill="#9c9c9c"/><rect x="66" y="1063" width="3.500" height="7" fill="#9c9c9c"/><path d="M161.500 1069V1066.500Q161.500 1062.500 157 1062.500V1069Z" fill="#9c9c9c"/>
<text x="19" y="1073" textLength="31" lengthAdjust="spacing" class="st">Select</text><text x="77" y="1073" textLength="63" lengthAdjust="spacing" class="st">Rotate View</text><text x="166" y="1073" textLength="41" lengthAdjust="spacing" class="st">Options</text>
<text x="1427" y="1073" textLength="464" lengthAdjust="spacing" class="st">Circle.001 | Verts:20/563 | Edges:19/1,136 | Faces:0/574 | Tris:1,027 | Objects:1/1 | 4.4.0</text>
</svg>
</body></html>
